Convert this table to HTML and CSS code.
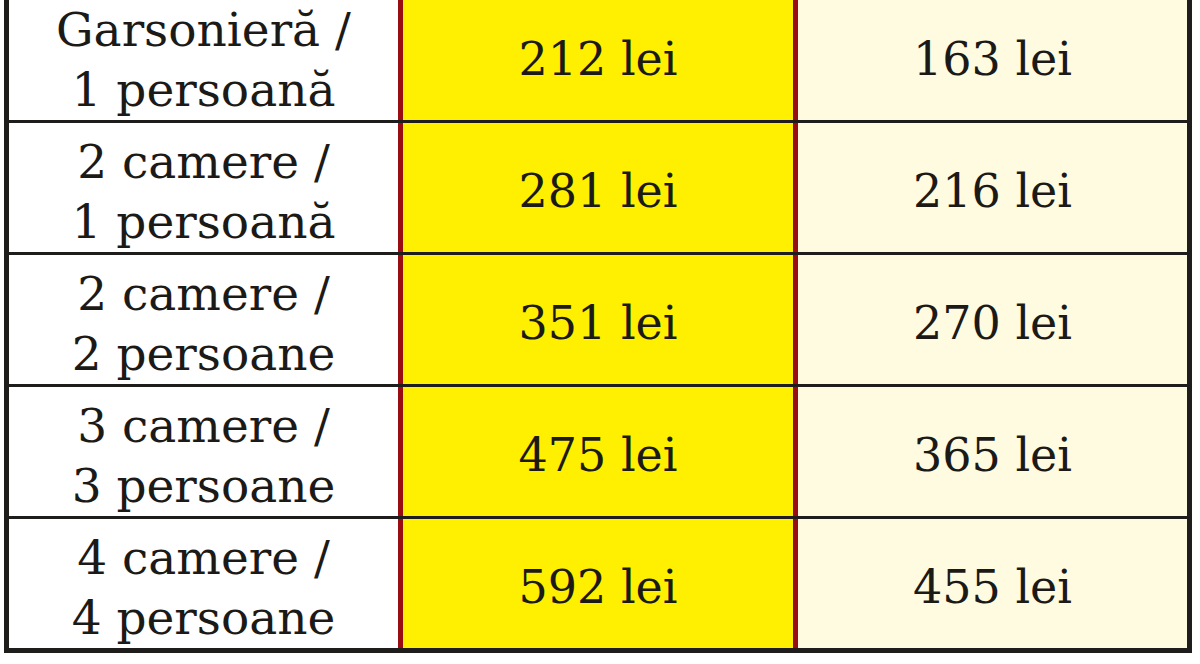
FILE: index.html
```html
<!DOCTYPE html>
<html lang="ro">
<head>
<meta charset="utf-8">
<title>Tarife</title>
<link rel="stylesheet" href="styles.css">
</head>
<body>
<div class="table">
  <div class="row">
    <div class="cell label">Garsonieră /<br>1 persoană</div>
    <div class="cell mid">212 lei</div>
    <div class="cell right">163 lei</div>
  </div>
  <div class="row">
    <div class="cell label">2 camere /<br>1 persoană</div>
    <div class="cell mid">281 lei</div>
    <div class="cell right">216 lei</div>
  </div>
  <div class="row">
    <div class="cell label">2 camere /<br>2 persoane</div>
    <div class="cell mid">351 lei</div>
    <div class="cell right">270 lei</div>
  </div>
  <div class="row">
    <div class="cell label">3 camere /<br>3 persoane</div>
    <div class="cell mid">475 lei</div>
    <div class="cell right">365 lei</div>
  </div>
  <div class="row">
    <div class="cell label">4 camere /<br>4 persoane</div>
    <div class="cell mid">592 lei</div>
    <div class="cell right">455 lei</div>
  </div>
</div>
</body>
</html>
```
FILE: styles.css
```css
html, body {
  margin: 0;
  padding: 0;
  background: #ffffff;
}
body {
  font-family: "DejaVu Serif", "Liberation Serif", serif;
  color: #1c1a17;
}
.table {
  margin: -14px 8px 0 4px;
  border: 5px solid #1f1d1b;
  width: 1178px;
}
.row {
  display: grid;
  grid-template-columns: 389px 400px 389px;
  height: 129px;
}
.row + .row {
  border-top: 3px solid #1f1d1b;
}
.cell {
  display: flex;
  align-items: center;
  justify-content: center;
  text-align: center;
  font-size: 46px;
  line-height: 60px;
  padding-top: 6px;
}
.label {
  background: #ffffff;
  font-size: 47px;
  padding-top: 8px;
}
.mid {
  background: #ffef00;
  border-left: 5px solid #980d12;
  border-right: 5px solid #980d12;
}
.right {
  background: #fffbe1;
}
```
